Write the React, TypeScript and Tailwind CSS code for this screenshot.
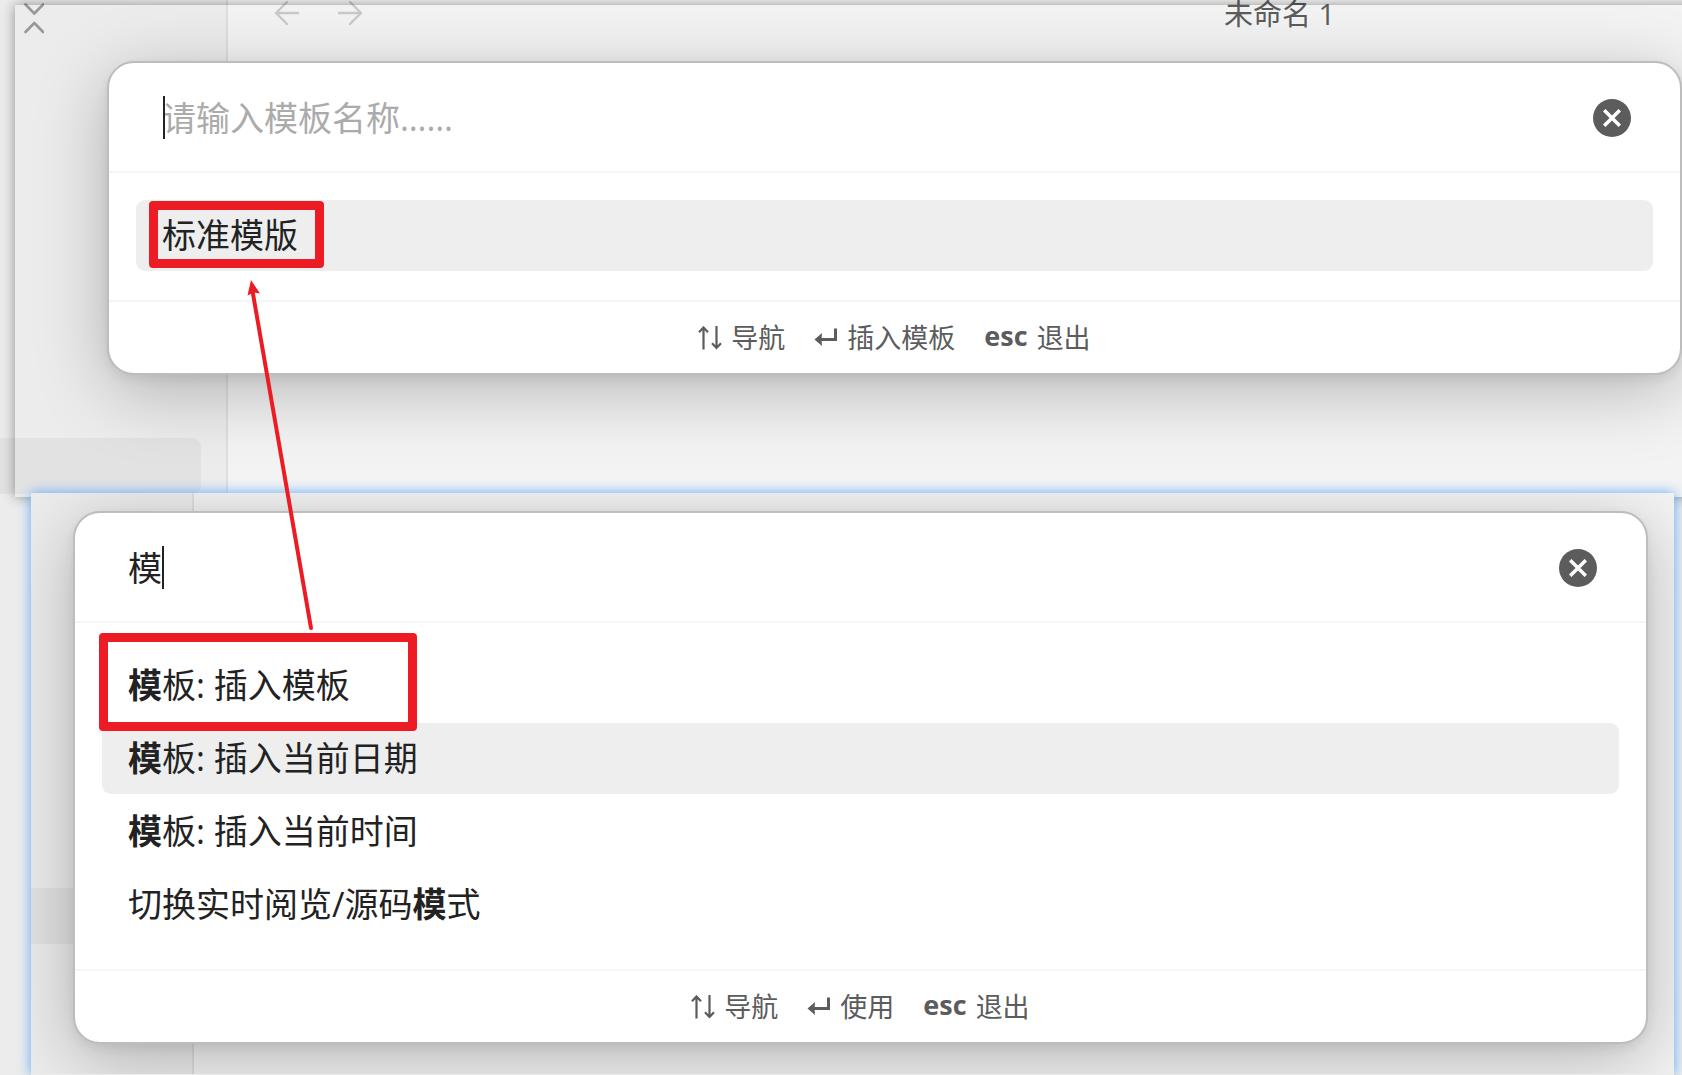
import { useState, type ReactNode } from "react"
import clsx from "clsx"

interface Suggestion {
  text: string
  callout?: string
}

interface Hint {
  keys: ReactNode
  label: string
}

const NAVIGATE: Hint = {
  keys: (
    <svg viewBox="0 0 24 24" role="img" aria-label="↑↓" className="h-[24px] w-[24px]" fill="none" stroke="#5c5c5c" strokeWidth="2.2">
      <path d="M5.500 23.500V1.500M1 6.200l4.500-4.700 4.500 4.700M18.500 0v22M14 17.300l4.500 4.700 4.500-4.700" />
    </svg>
  ),
  label: "导航",
}

const ESCAPE: Hint = {
  keys: <span className="font-['Open_Sans'] font-bold">esc</span>,
  label: "退出",
}

function enter(label: string): Hint {
  return {
    keys: (
      <svg viewBox="0 0 24 24" role="img" aria-label="↵" className="h-[24px] w-[24px]">
        <path d="M21.500 2.500V13.500H7" fill="none" stroke="#5c5c5c" strokeWidth="3" />
        <path d="M0.500 13.500L8 7 7.500 13.500 8 20z" fill="#5c5c5c" />
      </svg>
    ),
    label,
  }
}

const COMMANDS: Suggestion[] = [
  { text: "模板: 插入模板", callout: "-left-[3px] -top-[17px] h-[98px] w-[318px]" },
  { text: "模板: 插入当前日期" },
  { text: "模板: 插入当前时间" },
  { text: "切换实时阅览/源码模式" },
]

const TEMPLATES: Suggestion[] = [
  { text: "标准模版", callout: "left-[13px] top-px h-[67px] w-[175px]" },
]

// Bolds the first occurrence of the query inside a suggestion
function highlight(text: string, query: string): ReactNode {
  const at = query ? text.indexOf(query) : -1
  if (at < 0) return text
  return (
    <>
      {text.slice(0, at)}
      <b className="font-bold">{query}</b>
      {text.slice(at + query.length)}
    </>
  )
}

function Prompt({
  name,
  placeholder,
  initialQuery = "",
  items,
  initialActive = 0,
  hints,
  caretClass,
}: {
  name: string
  placeholder: string
  initialQuery?: string
  items: Suggestion[]
  initialActive?: number
  hints: Hint[]
  caretClass: string
}) {
  const [query, setQuery] = useState(initialQuery)
  const [active, setActive] = useState(initialActive)

  return (
    <div
      role="dialog"
      aria-label={name}
      className="relative rounded-[27px] border-2 border-[#bdbdbd] bg-white shadow-[0_16px_70px_rgba(0,0,0,0.25),0_4px_12px_rgba(0,0,0,0.07)]"
    >
      <div className="flex h-[110px] items-center border-b-2 border-[#f5f5f5] pt-[2px] pr-[49px] pl-[53px]">
        <div className="relative flex-1">
          <input
            aria-label={name}
            value={query}
            onChange={(e) => setQuery(e.target.value)}
            placeholder={placeholder}
            className="block h-[44px] w-full bg-transparent text-[34px] leading-[44px] text-[#222] outline-none placeholder:text-[#ababab]"
          />
          <span className={clsx("absolute top-0 h-[43px] w-[2px] bg-[#222]", caretClass)} />
        </div>
        <button
          type="button"
          aria-label="清除"
          onClick={() => setQuery("")}
          className="flex size-[38px] items-center justify-center rounded-full bg-[#5c5c5c]"
        >
          <svg viewBox="0 0 18 18" className="size-[18px]" fill="none" stroke="#fff" strokeWidth="3.5">
            <path d="M1.2 1.2l15.6 15.6M16.8 1.2L1.2 16.8" />
          </svg>
        </button>
      </div>

      <ul className="flex flex-col gap-[2px] px-[27px] pt-[27px] pb-[29px]">
        {items.map((item, i) => (
          <li key={item.text} className="relative">
            <button
              type="button"
              onClick={() => setActive(i)}
              className={clsx(
                "block h-[71px] w-full rounded-[9px] px-[26px] text-left text-[34px] leading-[71px] text-[#222]",
                i === active && "bg-[#eee]",
              )}
            >
              {highlight(item.text, query)}
            </button>
            {item.callout && (
              <span
                className={clsx(
                  "pointer-events-none absolute z-10 rounded-[4px] border-[9px] border-[#ed1c24]",
                  item.callout,
                )}
              />
            )}
          </li>
        ))}
      </ul>

      <div className="flex h-[73px] items-center justify-center gap-[29px] border-t-2 border-[#f5f5f5] text-[27px] leading-[36px] text-[#5c5c5c]">
        {hints.map((hint) => (
          <div key={hint.label} className="flex items-center gap-[9px]">
            <kbd>{hint.keys}</kbd>
            <span>{hint.label}</span>
          </div>
        ))}
      </div>
    </div>
  )
}

function TopWindow() {
  return (
    <section className="relative pt-[61px] pb-[122px] pl-[107px]">
      {/* App behind the modal */}
      <div className="absolute inset-0 flex">
        <div className="flex w-[228px] flex-col justify-between border-r-2 border-[#dedede] bg-[#ececec] pt-[3px] pb-[3px]">
          <button type="button" aria-label="折叠" className="ml-[24px] h-[31px] w-[20px]">
            <svg viewBox="0 0 20 31" className="h-[31px] w-[20px]" fill="none" stroke="#989898" strokeWidth="2.6" strokeLinecap="round" strokeLinejoin="round">
              <path d="M1.5 1.5l8.800 9 8.800-9M1.500 29l8.800-9 8.800 9" />
            </svg>
          </button>
          <div className="h-[56px] w-[201px] rounded-r-[9px] bg-[#e2e2e2]" />
        </div>
        <div className="flex flex-1 items-start bg-[#f3f3f3] pl-[46px]">
          <button type="button" aria-label="后退">
            <svg viewBox="0 0 26 26" className="size-[26px]" fill="none" stroke="#c9c9c9" strokeWidth="2.4" strokeLinecap="round" strokeLinejoin="round">
              <path d="M24 13H2M13 2L2 13l11 11" />
            </svg>
          </button>
          <button type="button" aria-label="前进" className="ml-[37px]">
            <svg viewBox="0 0 26 26" className="size-[26px]" fill="none" stroke="#c9c9c9" strokeWidth="2.4" strokeLinecap="round" strokeLinejoin="round">
              <path d="M2 13h22M13 2l11 11-11 11" />
            </svg>
          </button>
          <h1 className="flex-1 pl-[514px] text-center text-[29px] leading-[28px] text-[#5c5c5c]">未命名 1</h1>
        </div>
      </div>
      <div className="absolute top-[5px] -right-5 bottom-0 left-[15px] shadow-[0_0_12px_rgba(0,0,0,0.4)]" />
      <Prompt
        name="插入模板"
        placeholder="请输入模板名称……"
        items={TEMPLATES}
        hints={[NAVIGATE, enter("插入模板"), ESCAPE]}
        caretClass="left-px"
      />
    </section>
  )
}

function BottomWindow() {
  return (
    <section className="relative -mt-1 mr-[8px] ml-[31px] flex-1 shadow-[0_0_12px_#5ca8fa]">
      <div className="relative h-full overflow-hidden bg-[#f3f3f3] pt-[18px] pr-[26px] pb-[30px] pl-[42px]">
        <div className="absolute inset-y-0 left-0 w-[163px] border-r-2 border-[#dedede] bg-[#ececec] pt-[395px]">
          <div className="h-[56px] bg-[#e2e2e2]" />
        </div>
        <Prompt
          name="命令面板"
          placeholder="请输入命令……"
          initialQuery="模"
          items={COMMANDS}
          initialActive={1}
          hints={[NAVIGATE, enter("使用"), ESCAPE]}
          caretClass="left-[34px]"
        />
      </div>
    </section>
  )
}

export default function App() {
  return (
    <div className="relative flex min-h-screen flex-col overflow-hidden bg-[#ececec] font-['Open_Sans','Noto_Sans_CJK_SC',sans-serif]">
      <TopWindow />
      <BottomWindow />
      {/* Pointer from the command to the template it opens */}
      <svg
        viewBox="0 0 70 352"
        className="pointer-events-none absolute top-[279px] left-[244px] h-[352px] w-[70px]"
        fill="#ed1c24"
      >
        <path d="M8.500 12L67 349" stroke="#ed1c24" strokeWidth="4" strokeLinecap="round" />
        <path d="M7 1L16 14.500 9.500 13.500 3.500 16.500z" />
      </svg>
    </div>
  )
}
